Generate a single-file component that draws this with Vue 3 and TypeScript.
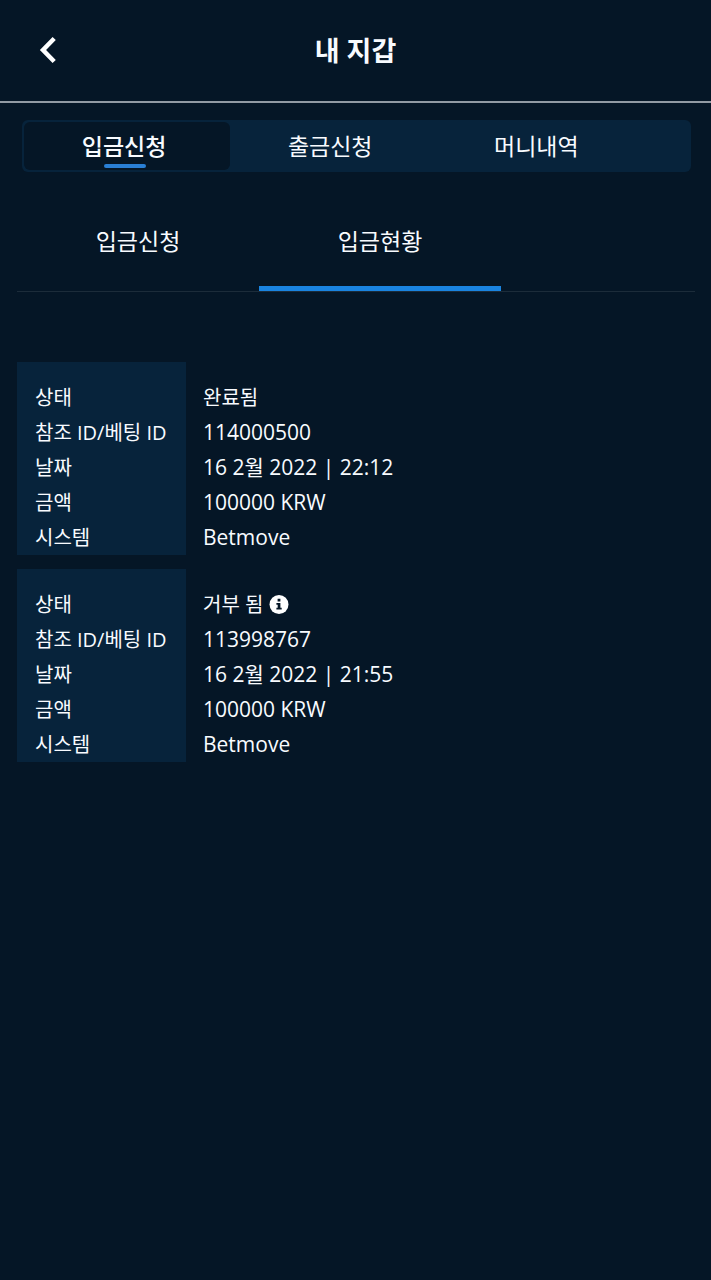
<script setup lang="ts">
import { ref } from 'vue'

interface Transaction {
  status: string
  info: boolean
  id: string
  date: string
  amount: string
  system: string
}

const mainTabs = ['입금신청', '출금신청', '머니내역']
const subTabs = ['입금신청', '입금현황']
const activeMain = ref(0)
const activeSub = ref(1)

const transactions: Transaction[] = [
  { status: '완료됨', info: false, id: '114000500', date: '16 2월 2022 | 22:12', amount: '100000 KRW', system: 'Betmove' },
  { status: '거부 됨', info: true, id: '113998767', date: '16 2월 2022 | 21:55', amount: '100000 KRW', system: 'Betmove' },
]
</script>

<template>
  <div class="page">
    <header class="header">
      <button class="back" type="button" aria-label="뒤로">
        <svg width="18" height="30" viewBox="0 0 18 30" aria-hidden="true">
          <path d="M15.2 2.5 4 14l11.2 11.5" fill="none" stroke="#fff" stroke-width="4.5" />
        </svg>
      </button>
      <h1 class="title">내 지갑</h1>
    </header>
    <nav class="main-tabs">
      <button
        v-for="(tab, i) in mainTabs"
        :key="tab"
        type="button"
        class="main-tab"
        :class="{ active: i === activeMain }"
        @click="activeMain = i"
      >{{ tab }}</button>
    </nav>
    <nav class="sub-tabs">
      <button
        v-for="(tab, i) in subTabs"
        :key="tab"
        type="button"
        class="sub-tab"
        :class="{ active: i === activeSub }"
        @click="activeSub = i"
      >{{ tab }}</button>
    </nav>
    <main class="list">
      <table v-for="t in transactions" :key="t.id" class="record">
        <tbody>
          <tr>
            <th scope="row">상태</th>
            <td>
              <span class="status">{{ t.status }}
                <button v-if="t.info" class="info" type="button" aria-label="정보">
                  <svg width="20" height="20" viewBox="0 0 20 20" aria-hidden="true">
                    <circle cx="10" cy="9.5" r="9.5" fill="#fff" />
                    <path d="M8.6 3.8h2.8v2.8H8.6zM7.4 7.9h4v4.9h1.3v1.8H7.4v-1.8h1.3V9.7H7.4z" fill="#051626" />
                  </svg>
                </button>
              </span>
            </td>
          </tr>
          <tr><th scope="row">참조 ID/베팅 ID</th><td>{{ t.id }}</td></tr>
          <tr><th scope="row">날짜</th><td>{{ t.date }}</td></tr>
          <tr><th scope="row">금액</th><td>{{ t.amount }}</td></tr>
          <tr><th scope="row">시스템</th><td>{{ t.system }}</td></tr>
        </tbody>
      </table>
    </main>
  </div>
</template>

<style>
body {
  background: #051626;
}
</style>

<style scoped>
.page {
  min-height: 100vh;
  background: #051626;
  color: #f8fbff;
  font-family: "Open Sans", "Noto Sans CJK KR", sans-serif;
  font-size: 20px;
}
button {
  padding: 0;
  border: 0;
  background: none;
  color: inherit;
  font: inherit;
  cursor: pointer;
}
.header {
  display: grid;
  grid-template-columns: 96px 1fr 96px;
  align-items: center;
  height: 101px;
  border-bottom: 2px solid #929ba4;
}
.back {
  display: grid;
  place-items: center;
  height: 48px;
}
.title {
  margin: 0;
  text-align: center;
  font-size: 27px;
  line-height: 36px;
  font-weight: 600;
}
.main-tabs {
  display: flex;
  margin: 17px 20px 0 22px;
  padding: 2px;
  border-radius: 6px;
  background: #07233b;
}
.main-tab {
  position: relative;
  flex: 0 0 31%;
  height: 48px;
  padding-right: 6px;
  border-radius: 6px;
  font-size: 23px;
  line-height: 32px;
}
.main-tab.active {
  background: #051626;
  font-weight: 500;
}
.main-tab.active::after {
  content: "";
  position: absolute;
  left: 39%;
  bottom: 2px;
  width: 20%;
  height: 4px;
  border-radius: 2px;
  background: #2a7fd4;
}
.sub-tabs {
  display: flex;
  height: 102px;
  margin: 17px 16px 0 17px;
  border-bottom: 1px solid #1c2c3a;
}
.sub-tab {
  width: 242px;
  padding-top: 4px;
  border-bottom: 5px solid transparent;
  font-size: 23px;
}
.sub-tab.active {
  border-bottom-color: #1a84e0;
}
.list {
  display: grid;
  gap: 14px;
  padding: 70px 16px 24px 17px;
}
.record {
  width: 100%;
  border-spacing: 0;
  line-height: 35px;
}
th {
  width: 151px;
  padding: 0 0 0 18px;
  background: #07233b;
  text-align: left;
  font-weight: 400;
  white-space: nowrap;
}
td {
  padding: 0 0 0 17px;
  font-size: 21px;
}
tr:first-child th,
tr:first-child td {
  padding-top: 18px;
}
.status {
  display: flex;
  align-items: center;
  gap: 6px;
  font-size: 20px;
}
.info {
  display: grid;
  place-items: center;
}
</style>
